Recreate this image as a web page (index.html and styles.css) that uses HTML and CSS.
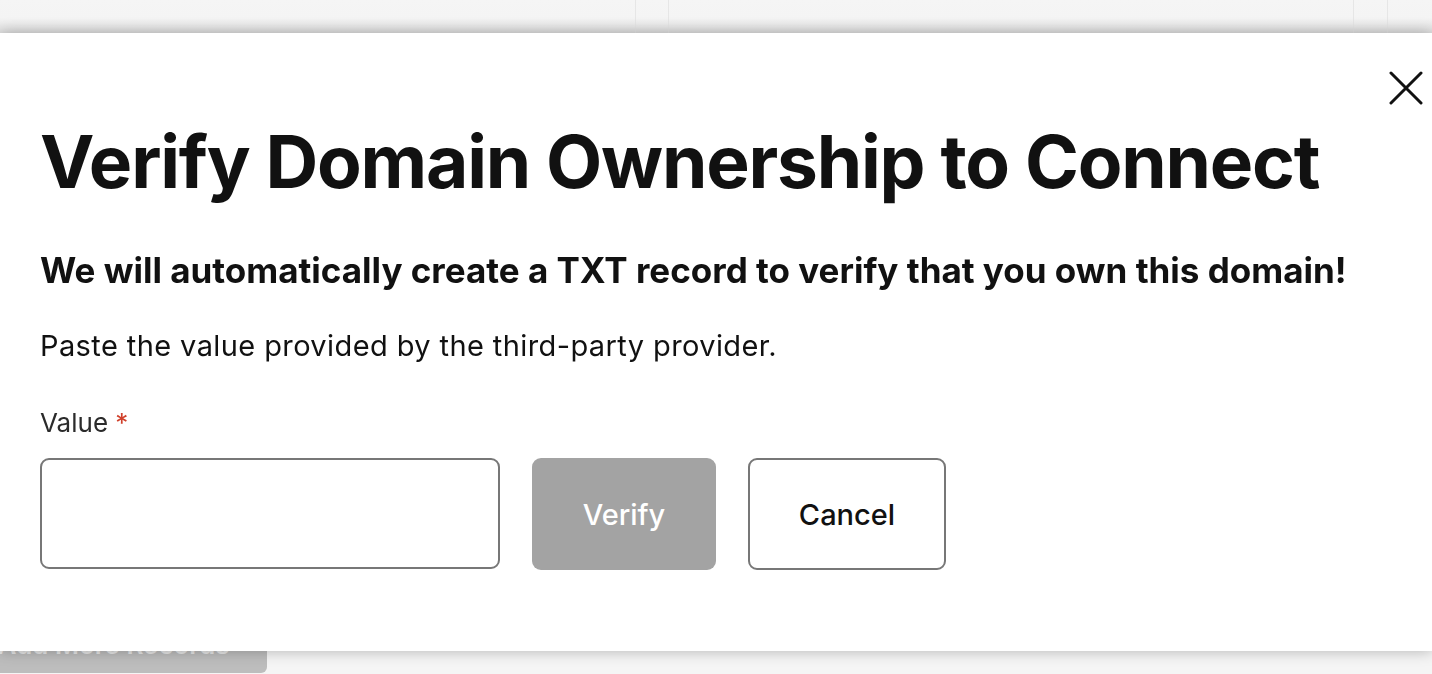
FILE: index.html
```html
<!DOCTYPE html>
<html lang="en">
<head>
<meta charset="utf-8">
<title>Verify Domain Ownership</title>
<link rel="stylesheet" href="styles.css">
</head>
<body>
<div class="page">
  <div class="topbar">
    <div class="col col-a"></div>
    <div class="col col-b"></div>
    <div class="col col-c"></div>
    <div class="col col-d"></div>
    <div class="col col-e"></div>
  </div>
  <div class="page-body">
    <button class="add-more" type="button">Add More Records</button>
  </div>
</div>

<div class="modal" role="dialog" aria-labelledby="modal-title">
  <button class="close" type="button" aria-label="Close">
    <svg width="34" height="34" viewBox="0 0 34 34" aria-hidden="true">
      <path d="M2 2 L32 32 M32 2 L2 32" stroke="#111" stroke-width="3" stroke-linecap="round" fill="none"/>
    </svg>
  </button>
  <h1 id="modal-title" class="title">Verify Domain Ownership to Connect</h1>
  <h2 class="subtitle">We will automatically create a TXT record to verify that you own this domain!</h2>
  <p class="lead">Paste the value provided by the third-party provider.</p>
  <label class="label" for="value">Value <span class="req">*</span></label>
  <div class="row">
    <input id="value" class="input" type="text">
    <button class="btn btn-primary" type="button" disabled>Verify</button>
    <button class="btn btn-secondary" type="button">Cancel</button>
  </div>
</div>
</body>
</html>
```

FILE: styles.css
```css
* { box-sizing: border-box; }
html, body {
  margin: 0;
  padding: 0;
  height: 100%;
  overflow: hidden;
}
body {
  font-family: Inter, "Noto Sans", sans-serif;
  background: #f5f5f5;
  color: #111;
}
.page {
  height: 100%;
  display: flex;
  flex-direction: column;
}
.topbar {
  height: 33px;
  display: flex;
  background: linear-gradient(#f5f5f5 0, #f4f4f4 18px, #e2e2e2 32px);
}
.col { height: 100%; border-right: 1px solid #e6e6e6; }
.col-a { width: 636px; }
.col-b { width: 33px; }
.col-c { width: 685px; }
.col-d { width: 34px; }
.col-e { flex: 1; border-right: none; }
.page-body {
  flex: 1;
  display: flex;
  align-items: flex-end;
}
.add-more {
  margin-left: -40px;
  width: 307px;
  height: 48px;
  border: none;
  border-radius: 0 0 6px 0;
  background: #bdbdbd;
  color: #e6e6e6;
  font-family: inherit;
  font-size: 26px;
  font-weight: 600;
  padding: 0 0 10px;
  margin-bottom: 1px;
}
.modal {
  position: fixed;
  left: 0;
  right: 0;
  top: 33px;
  height: 618px;
  background: #fff;
  box-shadow: 0 0 14px rgba(0,0,0,0.28);
  padding: 89px 40px 0 40px;
}
.close {
  position: absolute;
  top: 38px;
  right: 9px;
  width: 34px;
  height: 34px;
  padding: 0;
  border: none;
  background: none;
}
.title {
  margin: 0;
  font-size: 73px;
  line-height: 80px;
  font-weight: 700;
  letter-spacing: -1.2px;
  color: #111;
}
.subtitle {
  margin: 48px 0 0;
  font-size: 35px;
  line-height: 40px;
  font-weight: 700;
  color: #111;
}
.lead {
  margin: 38px 0 0;
  font-size: 29px;
  line-height: 36px;
  letter-spacing: 0.4px;
  color: #111;
}
.label {
  display: block;
  margin-top: 43px;
  font-size: 26px;
  line-height: 32px;
  color: #2b2b2b;
}
.req { color: #d0402b; }
.row {
  margin-top: 19px;
  display: flex;
  gap: 32px;
}
.input {
  width: 460px;
  height: 111px;
  border: 2px solid #777;
  border-radius: 9px;
  font-size: 26px;
  padding: 0 16px;
}
.btn {
  height: 112px;
  border-radius: 9px;
  font-family: inherit;
  font-size: 29px;
  font-weight: 500;
}
.btn-primary {
  width: 184px;
  background: #a3a3a3;
  border: none;
  color: #fff;
}
.btn-secondary {
  width: 198px;
  background: #fff;
  border: 2px solid #777;
  color: #111;
}
```
